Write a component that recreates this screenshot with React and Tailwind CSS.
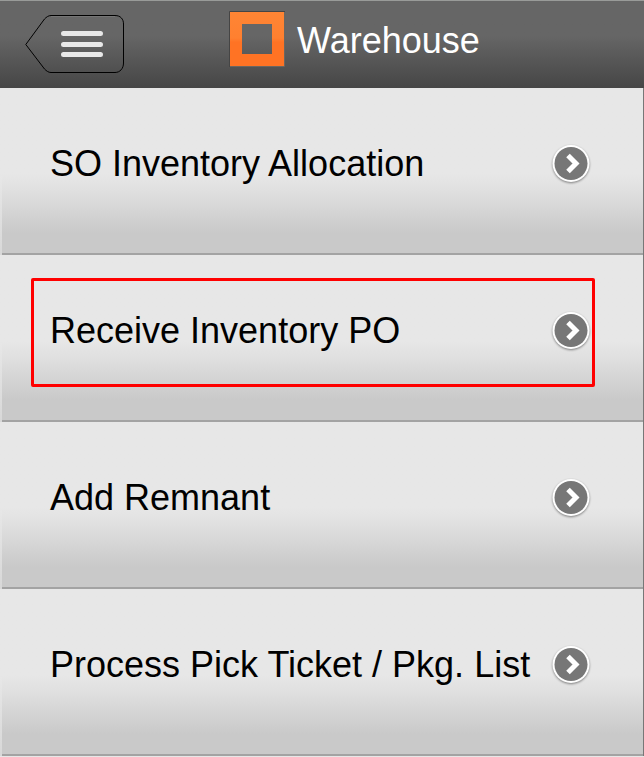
const MENU_ITEMS = [
  { id: "allocation", title: "SO Inventory Allocation" },
  { id: "receive", title: "Receive Inventory PO", highlighted: true },
  { id: "remnant", title: "Add Remnant" },
  { id: "pick-ticket", title: "Process Pick Ticket / Pkg. List" },
];

function Logo() {
  return (
    <svg className="w-14 h-14 shrink-0" viewBox="0 0 56 56" aria-hidden="true">
      <defs>
        <linearGradient id="logo-fill" x1="0" y1="0" x2="0" y2="1">
          <stop offset="0" stopColor="#ff8534" />
          <stop offset="0.48" stopColor="#ff8030" />
          <stop offset="0.56" stopColor="#ff7324" />
          <stop offset="1" stopColor="#ff7324" />
        </linearGradient>
      </defs>
      <path d="M0.5 56V0.5H56" fill="none" stroke="#454545" />
      <path d="M55.5 1V55.5H1" fill="none" stroke="#6b6660" />
      <path d="M1 1H55V55H1ZM13 13V43H43V13Z" fill="url(#logo-fill)" fillRule="evenodd" />
    </svg>
  );
}

function MenuButton() {
  return (
    <button type="button" aria-label="Menu" className="shrink-0 cursor-pointer">
      <svg className="block w-[101px] h-[59px]" viewBox="-1 1 101 59" fill="none">
        <path d="M26 2.5H90" stroke="#757575" />
        <path
          d="M26 1.500H90C95.500 1.500 98.500 5 98.500 10V49C98.500 54.500 95 58.500 90 58.500H26C23.500 58.500 21.500 57 19.500 55L0.800 30.500L19.500 5C21.500 3 23.500 1.500 26 1.500Z"
          stroke="#000"
        />
        <path d="M38.500 19.500H75.500M38.500 30.500H75.500M38.500 40.500H75.500" stroke="#e8e8e8" strokeWidth="5" strokeLinecap="round" />
      </svg>
    </button>
  );
}

function ArrowBadge() {
  return (
    <svg className="w-10 h-10 shrink-0 drop-shadow-[0_1px_1px_rgba(0,0,0,0.45)]" viewBox="0 0 40 40" aria-hidden="true">
      <circle cx="20" cy="19.5" r="18.5" fill="#fff" />
      <circle cx="20" cy="19.5" r="16.5" fill="#777" />
      <path d="M17 11.5L25 19.5L17 27.5" fill="none" stroke="#fff" strokeWidth="5" />
    </svg>
  );
}

export default function App() {
  return (
    <div className="min-h-screen bg-[#e7e7e7] font-['Liberation_Sans',Arial,sans-serif] text-4xl">
      <header className="flex items-center h-22 pl-6 pr-15 border-t border-[#999b99] bg-linear-to-b from-[#666] from-40% to-[#464646] text-white">
        <MenuButton />
        <div className="flex flex-1 items-center justify-center gap-3 pb-[11px]">
          <Logo />
          <h1 className="pt-1">Warehouse</h1>
        </div>
      </header>

      <nav className="border-r border-[#777] bg-[#e7e7e7]">
        <ul>
          {MENU_ITEMS.map((item) => (
            <li key={item.id} className="relative">
              <a
                href={`#${item.id}`}
                className="flex items-center justify-between gap-4 min-h-[167px] pl-[50px] pr-[52px] pb-3.5 border-b-2 border-[#a3a3a3] bg-linear-to-b from-[#e7e7e7] from-52% via-[#e0e0e0] via-62% to-[#c9c9c9] to-88% text-black"
              >
                <span>{item.title}</span>
                <ArrowBadge />
              </a>
              {/* light bevel on the left edge */}
              <div className="absolute left-0 top-22 bottom-0 w-0.5 bg-linear-to-b from-[#e7e7e7] to-[#d8d8d8]" />
              {item.highlighted && (
                <div className="absolute left-[31px] right-12 top-[23px] bottom-[35px] rounded-xs border-3 border-[#ff0000] pointer-events-none" />
              )}
            </li>
          ))}
        </ul>
      </nav>
    </div>
  );
}
